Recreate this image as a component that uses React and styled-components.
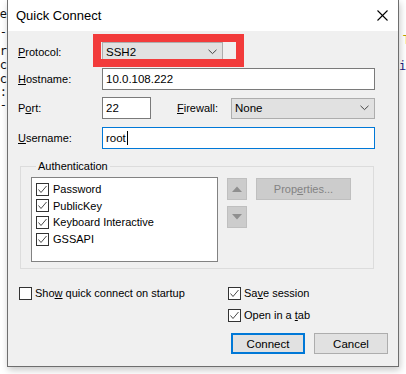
import React from "react";
import styled, { createGlobalStyle } from "styled-components";

const GlobalStyle = createGlobalStyle`
  html, body {
    margin: 0;
    padding: 0;
    background: #fff;
  }
  body {
    font-family: "Liberation Sans", Arial, sans-serif;
  }
`;

// terminal text peeking out behind the dialog
const leftLines = [
  { text: "me", gap: 8 },
  { text: "_ -", gap: 5 },
  { text: "er", gap: 6 },
  { text: "ac", gap: 1 },
  { text: "ac", gap: 1 },
  { text: "n :", gap: 0 },
  { text: "- -", gap: 0 },
];

const rightLines = [
  { text: "T", gap: 34, color: "#b9a200", indent: 4 },
  { text: "i:", gap: 13, color: "#1a1a80", indent: 0 },
];

const authMethods = ["Password", "PublicKey", "Keyboard Interactive", "GSSAPI"];

const CheckIcon = () => (
  <svg width="11" height="11" viewBox="0 0 11 11">
    <polyline points="1.5,5.5 4,8.5 9.5,2" fill="none" stroke="#4a4a4a" strokeWidth="1" />
  </svg>
);

const Chevron = () => (
  <svg width="9" height="6" viewBox="0 0 9 6">
    <polyline points="0.5,0.8 4.5,4.6 8.5,0.8" fill="none" stroke="#444" strokeWidth="1" />
  </svg>
);

const CloseIcon = () => (
  <svg width="11" height="11" viewBox="0 0 11 11">
    <line x1="0.5" y1="0.5" x2="10.5" y2="10.5" stroke="#000" strokeWidth="1.1" />
    <line x1="10.5" y1="0.5" x2="0.5" y2="10.5" stroke="#000" strokeWidth="1.1" />
  </svg>
);

const Arrow = ({ up }) => (
  <svg width="10" height="6" viewBox="0 0 10 6">
    <polygon points={up ? "0,6 5,0.5 10,6" : "0,0 5,5.5 10,0"} fill="#8f8f8f" />
  </svg>
);

const Checkbox = ({ checked }) => (
  <Box>{checked && <CheckIcon />}</Box>
);

const App = () => {
  return (
    <>
      <GlobalStyle />
      <Desktop>
        <TermStrip $side="left">
          {leftLines.map((l, i) => (
            <TermLine key={i} $gap={l.gap}>{l.text}</TermLine>
          ))}
        </TermStrip>

        <Window>
          <TitleBar>
            <Title>Quick Connect</Title>
            <CloseButton><CloseIcon /></CloseButton>
          </TitleBar>

          <Body>
            <FieldRow $top={10}>
              <Label><u>P</u>rotocol:</Label>
              <Highlight>
                <Combo $width={121}>
                  <span>SSH2</span>
                  <Chevron />
                </Combo>
                <RedFrame />
              </Highlight>
            </FieldRow>

            <FieldRow $top={5}>
              <Label><u>H</u>ostname:</Label>
              <TextField>10.0.108.222</TextField>
            </FieldRow>

            <FieldRow $top={7}>
              <Label>P<u>o</u>rt:</Label>
              <TextField $width={49}>22</TextField>
              <SideLabel><u>F</u>irewall:</SideLabel>
              <Combo $width={144}>
                <span>None</span>
                <Chevron />
              </Combo>
            </FieldRow>

            <FieldRow $top={8}>
              <Label><u>U</u>sername:</Label>
              <TextField $focused>
                root<Caret />
              </TextField>
            </FieldRow>

            <Group>
              <Legend>Authentication</Legend>
              <GroupContent>
                <ListBox>
                  {authMethods.map(m => (
                    <ListItem key={m}>
                      <Checkbox checked />
                      <span>{m}</span>
                    </ListItem>
                  ))}
                </ListBox>
                <ArrowColumn>
                  <SmallButton><Arrow up /></SmallButton>
                  <SmallButton><Arrow /></SmallButton>
                </ArrowColumn>
                <PropertiesButton>Prop<u>e</u>rties...</PropertiesButton>
              </GroupContent>
            </Group>

            <Options>
              <Option>
                <Checkbox />
                <span>Sho<u>w</u> quick connect on startup</span>
              </Option>
              <Option>
                <Checkbox checked />
                <span>Sa<u>v</u>e session</span>
              </Option>
              <span />
              <Option>
                <Checkbox checked />
                <span>Open in a <u>t</u>ab</span>
              </Option>
            </Options>

            <ButtonRow>
              <Button $primary>Connect</Button>
              <Button>Cancel</Button>
            </ButtonRow>
          </Body>
        </Window>

        <TermStrip $side="right">
          {rightLines.map((l, i) => (
            <TermLine key={i} $gap={l.gap} $color={l.color} $indent={l.indent}>{l.text}</TermLine>
          ))}
        </TermStrip>
      </Desktop>
    </>
  );
};

const Desktop = styled.div`
  width: 406px;
  height: 374px;
  overflow: hidden;
  display: grid;
  grid-template-columns: 7px 392px 7px;
  grid-template-rows: 367px 1fr;
  background: #fff;
`;

const TermStrip = styled.div`
  grid-row: 1;
  display: flex;
  flex-direction: column;
  align-items: ${p => (p.$side === "left" ? "flex-end" : "flex-start")};
  overflow: hidden;
  font-family: "DejaVu Sans Mono", monospace;
  font-size: 12px;
  line-height: 13px;
  white-space: pre;
  color: #111;
`;

const TermLine = styled.div`
  margin-top: ${p => p.$gap}px;
  padding-left: ${p => p.$indent || 0}px;
  color: ${p => p.$color || "#111"};
`;

const Window = styled.div`
  grid-column: 2;
  grid-row: 1;
  box-sizing: border-box;
  display: flex;
  flex-direction: column;
  border: 1px solid #6e6e6e;
  border-top: none;
  background: #f0f0f0;
  box-shadow: 1px 3px 7px rgba(0, 0, 0, 0.22);
  font-family: "Liberation Sans", Arial, sans-serif;
  font-size: 11px;
  color: #000;
  position: relative;
  z-index: 1;
`;

const TitleBar = styled.div`
  height: 31px;
  flex: none;
  display: flex;
  align-items: center;
  justify-content: space-between;
  padding-left: 8px;
  background: #fff;
`;

const Title = styled.span`
  font-size: 13px;
`;

const CloseButton = styled.div`
  width: 31px;
  height: 31px;
  display: flex;
  align-items: center;
  justify-content: center;
`;

const Body = styled.div`
  flex: 1;
  display: flex;
  flex-direction: column;
  padding: 0 10px 0 10px;
`;

const FieldRow = styled.div`
  display: flex;
  align-items: center;
  height: 22px;
  margin-top: ${p => p.$top}px;
  margin-right: 13px;
`;

const Label = styled.span`
  width: 84px;
  flex: none;
`;

const SideLabel = styled.span`
  width: 54px;
  flex: none;
  margin-left: 26px;
`;

const TextField = styled.div`
  box-sizing: border-box;
  height: 22px;
  ${p => (p.$width ? `width: ${p.$width}px; flex: none;` : "flex: 1;")}
  display: flex;
  align-items: center;
  padding-left: 3px;
  background: #fff;
  border: 1px solid ${p => (p.$focused ? "#0078d7" : "#7a7a7a")};
  font-size: 11.5px;
`;

const Caret = styled.span`
  display: inline-block;
  width: 1px;
  height: 14px;
  margin-left: 1px;
  background: #000;
`;

const Highlight = styled.div`
  position: relative;
`;

const RedFrame = styled.div`
  position: absolute;
  left: -9px;
  top: -8px;
  width: 151px;
  height: 33px;
  box-sizing: border-box;
  border: 8px solid #f23b3b;
`;

const Combo = styled.div`
  box-sizing: border-box;
  width: ${p => p.$width}px;
  height: 21px;
  flex: none;
  display: flex;
  align-items: center;
  justify-content: space-between;
  padding: 0 5px 0 3px;
  background: #e1e1e1;
  border: 1px solid #adadad;
  font-size: 11.5px;
`;

const Group = styled.fieldset`
  margin: 11px 14px 0 2px;
  padding: 4px 0 6px 10px;
  border: 1px solid #dcdcdc;
  min-width: 0;
`;

const Legend = styled.legend`
  margin-left: 5px;
  padding: 0 2px;
  line-height: 13px;
  font-size: 11px;
`;

const GroupContent = styled.div`
  display: flex;
  align-items: flex-start;
`;

const ListBox = styled.div`
  box-sizing: border-box;
  width: 187px;
  height: 85px;
  padding: 3px 0 0 4px;
  background: #fff;
  border: 1px solid #828282;
  display: flex;
  flex-direction: column;
`;

const ListItem = styled.div`
  height: 16.6px;
  display: flex;
  align-items: center;
  gap: 4px;
`;

const Box = styled.span`
  box-sizing: border-box;
  width: 13px;
  height: 13px;
  flex: none;
  display: flex;
  align-items: center;
  justify-content: center;
  background: #fff;
  border: 1px solid #333;
`;

const ArrowColumn = styled.div`
  display: flex;
  flex-direction: column;
  gap: 6px;
  margin: 1px 0 0 9px;
`;

const SmallButton = styled.div`
  box-sizing: border-box;
  width: 20px;
  height: 22px;
  display: flex;
  align-items: center;
  justify-content: center;
  background: #cccccc;
  border: 1px solid #bfbfbf;
`;

const PropertiesButton = styled.div`
  box-sizing: border-box;
  width: 95px;
  height: 22px;
  margin: 1px 0 0 9px;
  display: flex;
  align-items: center;
  justify-content: center;
  background: #cccccc;
  border: 1px solid #bfbfbf;
  color: #838383;
`;

const Options = styled.div`
  display: grid;
  grid-template-columns: 209px 1fr;
  grid-auto-rows: 16px;
  row-gap: 6px;
  margin: 16px 0 0 1px;
`;

const Option = styled.div`
  display: flex;
  align-items: center;
  gap: 3px;
`;

const ButtonRow = styled.div`
  display: flex;
  justify-content: flex-end;
  gap: 9px;
  margin-top: 10px;
`;

const Button = styled.div`
  box-sizing: border-box;
  width: 74px;
  height: 21px;
  display: flex;
  align-items: center;
  justify-content: center;
  background: #e1e1e1;
  border: ${p => (p.$primary ? "2px solid #0078d7" : "1px solid #adadad")};
  font-size: 11.5px;
`;

export default App;
